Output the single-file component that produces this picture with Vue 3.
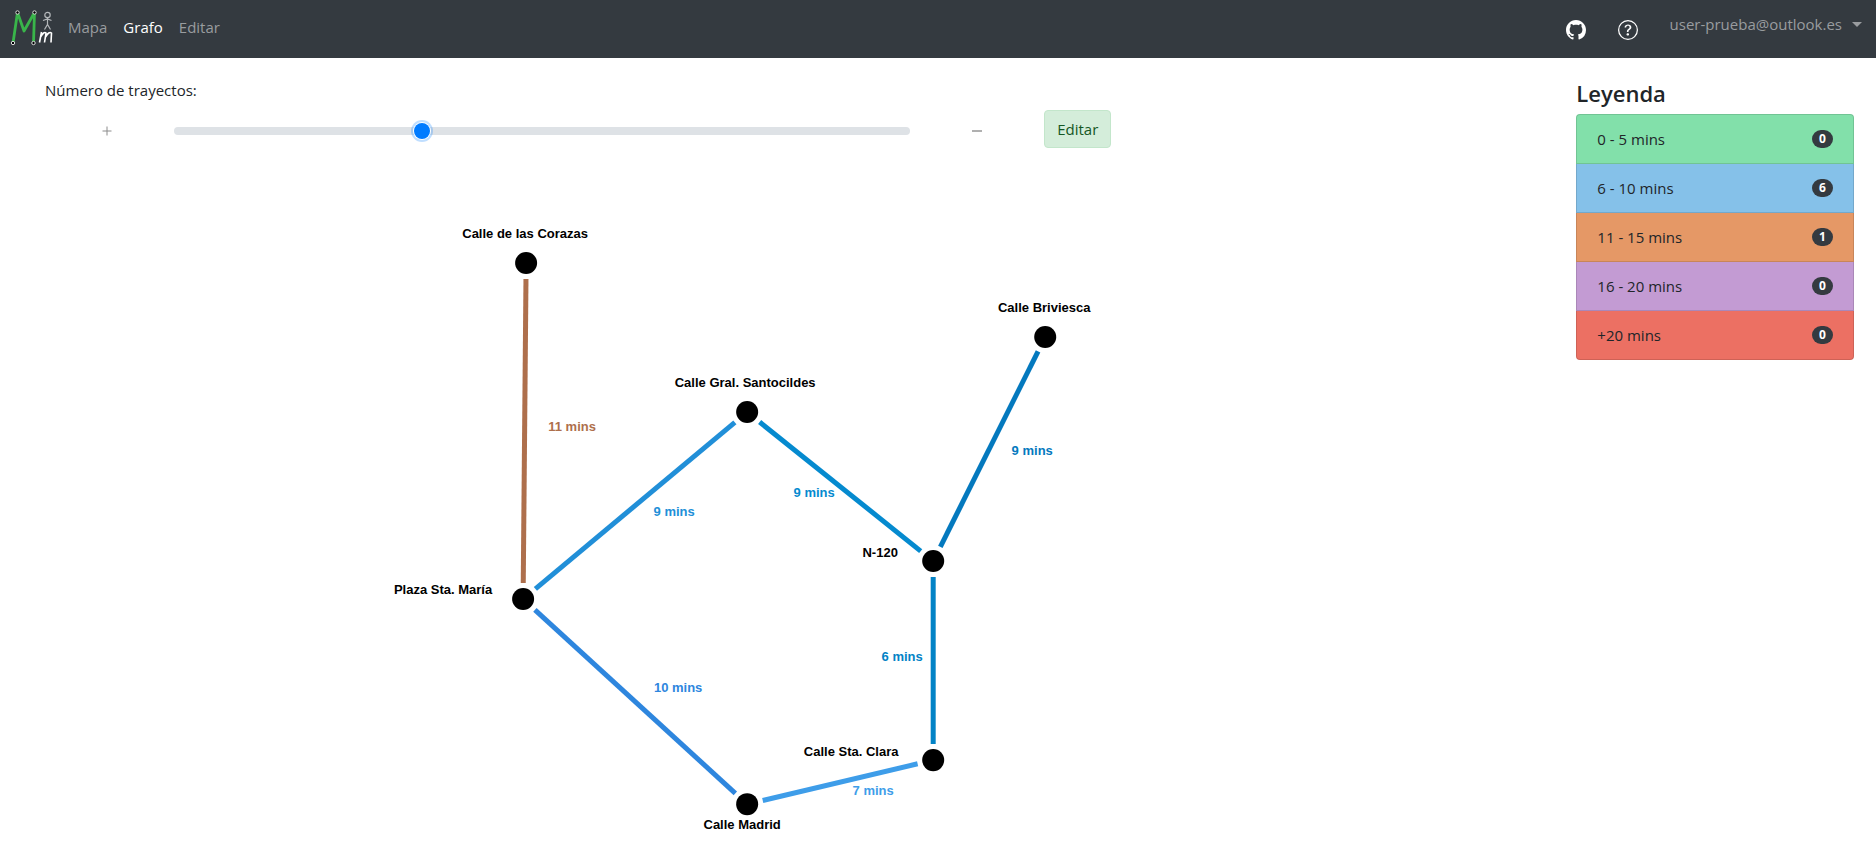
<script setup>
import { ref } from 'vue'

const trips = ref(2)

// lx/ly: centre and baseline of each label.
const nodes = [
  { name: 'Calle de las Corazas', x: 526, y: 263, lx: 525, ly: 238 },
  { name: 'Calle Gral. Santocildes', x: 747, y: 412, lx: 745, ly: 387 },
  { name: 'Calle Briviesca', x: 1045, y: 337, lx: 1044, ly: 312 },
  { name: 'N-120', x: 933, y: 561, lx: 880, ly: 557 },
  { name: 'Plaza Sta. María', x: 523, y: 599, lx: 443, ly: 594 },
  { name: 'Calle Sta. Clara', x: 933, y: 760, lx: 851, ly: 756 },
  { name: 'Calle Madrid', x: 747, y: 804, lx: 742, ly: 829 }
]

const links = [
  { from: 0, to: 4, label: '11 mins', lx: 572, ly: 431, color: '#ae6f4c' },
  { from: 1, to: 4, label: '9 mins', lx: 674, ly: 516, color: '#218fd8' },
  { from: 1, to: 3, label: '9 mins', lx: 814, ly: 497, color: '#058acf' },
  { from: 2, to: 3, label: '9 mins', lx: 1032, ly: 455, color: '#0479be' },
  { from: 3, to: 5, label: '6 mins', lx: 902, ly: 661, color: '#0383c6' },
  { from: 4, to: 6, label: '10 mins', lx: 678, ly: 692, color: '#2e86de' },
  { from: 5, to: 6, label: '7 mins', lx: 873, ly: 795, color: '#3e9de9' }
]

// Edges stop short of the node circles by a fixed gap.
const GAP = 16
const edges = links.map((l) => {
  const a = nodes[l.from]
  const b = nodes[l.to]
  const d = Math.hypot(b.x - a.x, b.y - a.y)
  const ux = ((b.x - a.x) / d) * GAP
  const uy = ((b.y - a.y) / d) * GAP
  return { ...l, x1: a.x + ux, y1: a.y + uy, x2: b.x - ux, y2: b.y - uy }
})

const legend = [
  { range: '0 - 5 mins', count: 0, cls: 'green' },
  { range: '6 - 10 mins', count: 6, cls: 'blue' },
  { range: '11 - 15 mins', count: 1, cls: 'orange' },
  { range: '16 - 20 mins', count: 0, cls: 'purple' },
  { range: '+20 mins', count: 0, cls: 'red' }
]
</script>

<template>
  <div class="app">
    <header class="navbar">
      <a href="#" class="brand" aria-label="Inicio">
        <svg width="44" height="40" viewBox="0 0 44 40" fill="none">
          <path d="M3 34 L7.500 3.500 L14 22 L24.500 3.500 L23.500 34" stroke="#39b54a" stroke-width="2.800" stroke-linejoin="round" />
          <g fill="#000" stroke="#ddd" stroke-width="1">
            <circle cx="3" cy="34" r="1.700" />
            <circle cx="7.500" cy="3.500" r="1.700" />
            <circle cx="24.500" cy="3.500" r="1.700" />
            <circle cx="23.500" cy="34" r="1.700" />
          </g>
          <g stroke="#b4b7ba" stroke-width="1.200">
            <circle cx="37.500" cy="6" r="2.700" />
            <path d="M37.500 9 V15.500 M33 11.500 L37.500 10 L41.500 11.500 M34.500 20.500 L37.500 15.500 L40.500 20.500" />
          </g>
          <path d="M31.500 23 L29.500 33.500 M30.500 28 Q34 22 36 24 L34.500 33.500 M35.500 28 Q39 22 41.500 24 L41 33.500" stroke="#fff" stroke-width="1.600" />
        </svg>
      </a>
      <nav class="links">
        <a href="#">Mapa</a>
        <a href="#" class="active">Grafo</a>
        <a href="#">Editar</a>
      </nav>
      <div class="tools">
        <a href="#" class="icon" aria-label="GitHub">
          <svg width="20" height="20" viewBox="0 0 16 16" fill="#fff">
            <path d="M8 0C3.580 0 0 3.580 0 8c0 3.540 2.290 6.530 5.470 7.590.4.070.55-.17.55-.38 0-.19-.01-.82-.01-1.490-2.010.37-2.530-.49-2.690-.94-.09-.23-.48-.94-.82-1.130-.28-.15-.68-.52-.01-.53.63-.01 1.080.58 1.230.82.72 1.210 1.870.87 2.330.66.070-.52.28-.87.51-1.070-1.780-.2-3.640-.89-3.640-3.950 0-.87.31-1.590.82-2.150-.08-.2-.36-1.020.08-2.120 0 0 .67-.21 2.200.82.64-.18 1.320-.27 2-.27s1.360.09 2 .27c1.530-1.040 2.200-.82 2.200-.82.44 1.100.16 1.920.08 2.120.51.56.82 1.270.82 2.150 0 3.070-1.870 3.750-3.650 3.950.29.25.54.73.54 1.480 0 1.070-.01 1.930-.01 2.200 0 .21.15.46.55.38A8.010 8.010 0 0 0 16 8c0-4.420-3.580-8-8-8z" />
          </svg>
        </a>
        <a href="#" class="icon" aria-label="Ayuda">
          <svg width="20" height="20" viewBox="0 0 16 16" fill="#fff">
            <path d="M8 15A7 7 0 1 1 8 1a7 7 0 0 1 0 14m0 1A8 8 0 1 0 8 0a8 8 0 0 0 0 16" />
            <path d="M5.255 5.786a.237.237 0 0 0 .241.247h.825c.138 0 .248-.113.266-.25.090-.656.540-1.134 1.342-1.134.686 0 1.314.343 1.314 1.168 0 .635-.374.927-.965 1.371-.673.489-1.206 1.060-1.168 1.987l.003.217a.25.25 0 0 0 .250.246h.811a.25.25 0 0 0 .250-.250v-.105c0-.718.273-.927 1.010-1.486.609-.463 1.244-.977 1.244-2.056 0-1.511-1.276-2.241-2.673-2.241-1.267 0-2.655.590-2.750 2.286m1.557 5.763c0 .533.425.927 1.010.927.609 0 1.028-.394 1.028-.927 0-.552-.420-.940-1.029-.940-.584 0-1.009.388-1.009.940" />
          </svg>
        </a>
        <button type="button" class="user">user-prueba@outlook.es<span class="caret"></span></button>
      </div>
    </header>

    <main class="content">
      <section class="board">
        <label class="range-label" for="trips">Número de trayectos:</label>
        <div class="controls">
          <svg class="sign" width="10" height="10" viewBox="0 0 10 10" stroke="#8c8c8c"><path d="M0.500 5 H9.500 M5 0.500 V9.500" /></svg>
          <input id="trips" v-model="trips" type="range" min="0" max="6" />
          <svg class="sign" width="10" height="10" viewBox="0 0 10 10" stroke="#b0b0b0" stroke-width="2"><path d="M0 5 H10" /></svg>
          <button type="button" class="edit">Editar</button>
        </div>
        <svg class="graph" viewBox="0 158 1563 684" preserveAspectRatio="xMidYMin meet">
          <g v-for="e in edges" :key="e.label + e.lx">
            <line :x1="e.x1" :y1="e.y1" :x2="e.x2" :y2="e.y2" :stroke="e.color" stroke-width="5" />
            <text :x="e.lx" :y="e.ly" :fill="e.color">{{ e.label }}</text>
          </g>
          <g v-for="n in nodes" :key="n.name">
            <circle :cx="n.x" :cy="n.y" r="11" />
            <text :x="n.lx" :y="n.ly">{{ n.name }}</text>
          </g>
        </svg>
      </section>

      <aside class="legend">
        <h2>Leyenda</h2>
        <ul>
          <li v-for="item in legend" :key="item.range" :class="item.cls">
            {{ item.range }}
            <span class="badge">{{ item.count }}</span>
          </li>
        </ul>
      </aside>
    </main>
  </div>
</template>

<style>
body {
  margin: 0;
  background: #fff;
}
</style>

<style scoped>
.app {
  font-family: "Segoe UI", "Open Sans", "Noto Sans", sans-serif;
  font-size: 15px;
  line-height: 24px;
  color: #212529;
}
.app * {
  box-sizing: border-box;
}
.navbar {
  display: flex;
  align-items: center;
  height: 58px;
  padding: 0 14px 0 10px;
  background: #343a40;
}
.brand {
  display: flex;
  margin-right: 14px;
}
.links {
  display: flex;
  gap: 16px;
  margin-bottom: 4px;
}
.links a {
  color: #999c9f;
  text-decoration: none;
}
.links a.active {
  color: #fff;
}
.tools {
  display: flex;
  align-items: center;
  margin-left: auto;
}
.icon {
  display: flex;
  margin: 2px 32px 0 0;
}
.user {
  display: flex;
  align-items: center;
  gap: 10px;
  margin-bottom: 10px;
  padding: 0;
  border: 0;
  background: none;
  color: #999c9f;
  font: inherit;
}
.caret {
  border: 5px solid transparent;
  border-top-color: #999c9f;
  border-bottom: 0;
}
.content {
  display: grid;
  grid-template-columns: 5fr 1fr;
}
.range-label {
  display: block;
  margin: 20px 0 8px 45px;
}
.controls {
  display: grid;
  grid-template-columns: 124fr 736fr 124fr 519fr;
  column-gap: 5px;
  align-items: center;
  padding-left: 45px;
}
.sign {
  justify-self: center;
  margin-top: 4px;
}
.controls input {
  appearance: none;
  width: 100%;
  height: 24px;
  margin: 4px 0 0;
  background: transparent;
  outline: 0;
}
.controls input::-webkit-slider-runnable-track {
  height: 8px;
  border-radius: 8px;
  background: #dee2e6;
}
.controls input::-webkit-slider-thumb {
  appearance: none;
  width: 16px;
  height: 16px;
  margin-top: -4px;
  border-radius: 50%;
  background: #007bff;
  box-shadow: 0 0 0 1px #fff, 0 0 0 3px rgba(0, 123, 255, 0.25);
}
.edit {
  justify-self: start;
  height: 38px;
  padding: 0 12px;
  border: 1px solid #c3e6cb;
  border-radius: 4px;
  background: #d4edda;
  color: #155724;
  font: inherit;
}
.graph {
  display: block;
  width: 100%;
  margin-top: 10px;
}
.graph text {
  font: bold 13px "Liberation Sans", Arial, sans-serif;
  text-anchor: middle;
}
.legend {
  padding: 21px 22px 0 13px;
}
.legend h2 {
  margin: 0 0 6px;
  font-size: 22px;
  line-height: 29px;
  font-weight: 600;
}
.legend ul {
  margin: 0;
  padding: 0;
  list-style: none;
}
.legend li {
  display: flex;
  align-items: center;
  justify-content: space-between;
  padding: 12px 20px;
  border: 1px solid rgba(0, 0, 0, 0.125);
}
.legend li + li {
  border-top: 0;
}
.legend li:first-child {
  border-radius: 4px 4px 0 0;
}
.legend li:last-child {
  border-radius: 0 0 4px 4px;
}
.green { background: #82e0aa; }
.blue { background: #85c1e9; }
.orange { background: #e59866; }
.purple { background: #c39bd3; }
.red { background: #ec7063; }
.badge {
  padding: 0 7px;
  border-radius: 9px;
  background: #343a40;
  color: #fff;
  font-size: 12px;
  font-weight: 700;
  line-height: 18px;
}
</style>
